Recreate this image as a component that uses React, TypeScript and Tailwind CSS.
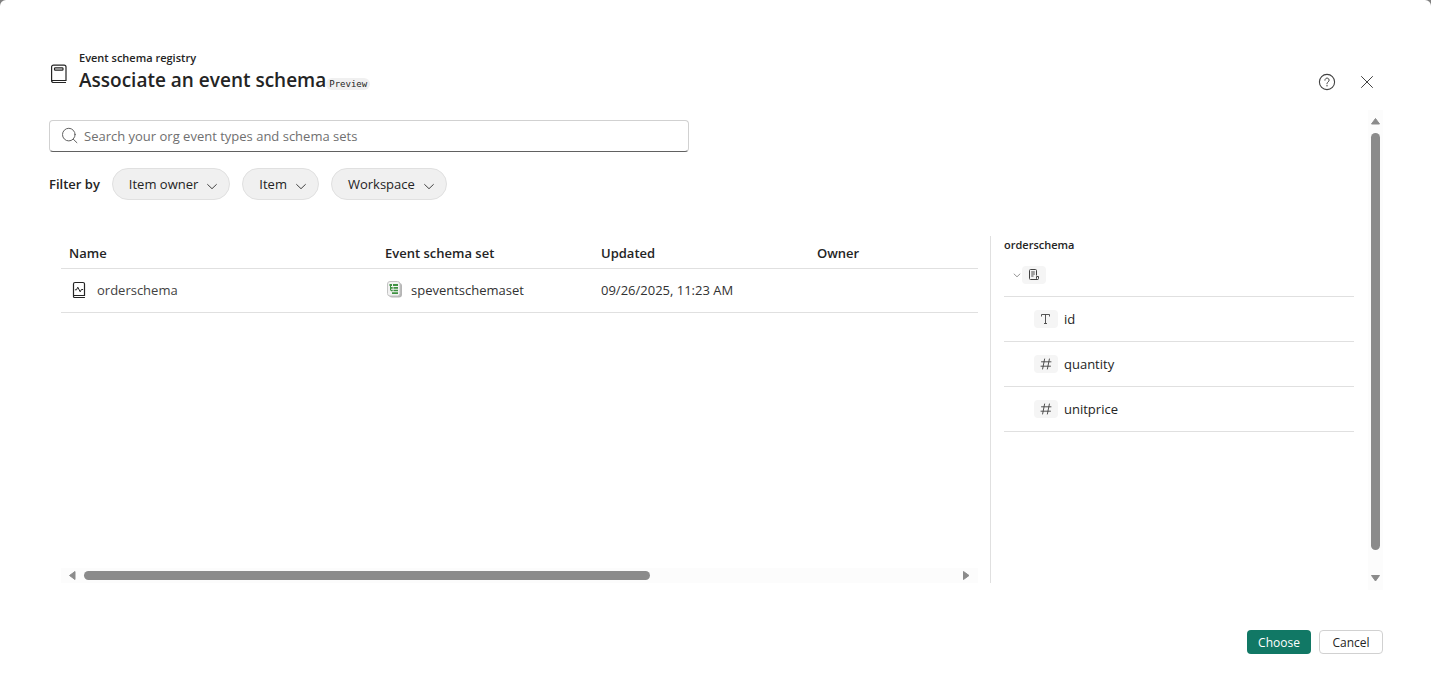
import { useState } from 'react';
import type { ReactNode } from 'react';

interface SchemaField {
  name: string;
  type: 'text' | 'number';
}

const filters = ['Item owner', 'Item', 'Workspace'];

const fields: SchemaField[] = [
  { name: 'id', type: 'text' },
  { name: 'quantity', type: 'number' },
  { name: 'unitprice', type: 'number' },
];

const BookIcon = () => (
  <svg width="20" height="20" viewBox="0 0 20 20" fill="none" stroke="#242424" strokeWidth="1.2">
    <path d="M17 18.5H4.5A1.8 1.8 0 0 1 2.6 16.7V3A1.9 1.9 0 0 1 4.5 1.1H15.100A1.900 1.900 0 0 1 17 3V16.5H2.8" />
    <rect x="5.500" y="3.800" width="8.500" height="2.400" rx="0.8" />
  </svg>
);

const HelpIcon = () => (
  <svg width="20" height="20" viewBox="0 0 20 20" fill="none" stroke="#424242">
    <circle cx="10" cy="10" r="7.6" strokeWidth="1.1" />
    <path d="M7.9 8.2a2.1 2.1 0 1 1 3.4 1.6c-.8.6-1.3 1-1.3 2" strokeLinecap="round" />
    <circle cx="10" cy="13.8" r="0.7" fill="#424242" stroke="none" />
  </svg>
);

const CloseIcon = () => (
  <svg width="20" height="20" viewBox="0 0 20 20" fill="none" stroke="#424242" strokeLinecap="round">
    <path d="M4.500 4.500l11 11M15.500 4.500l-11 11" />
  </svg>
);

const SearchIcon = () => (
  <svg width="20" height="20" viewBox="0 0 20 20" fill="none" stroke="#616161" strokeLinecap="round">
    <circle cx="8.8" cy="8.600" r="6.300" />
    <path d="M13.300 13.200l3.600 3.500" />
  </svg>
);

const ChevronIcon = ({ size, color }: { size: number; color: string }) => (
  <svg width={size} height={size} viewBox="0 0 12 12" fill="none" stroke={color} strokeLinecap="round">
    <path d="M1.600 4.500l4.400 4.200L10.400 4.500" />
  </svg>
);

const SchemaIcon = () => (
  <svg width="20" height="20" viewBox="0 0 20 20" fill="none" stroke="#242424" strokeLinecap="round">
    <path
      d="M15.500 17.500H5.500a1 1 0 0 1-1-1V4A1.500 1.500 0 0 1 6 2.500h8A1.500 1.500 0 0 1 15.500 4v11.500H4.500"
      strokeWidth="1.2"
    />
    <path d="M6.300 9.800h1.200l1.300-2.600 2.400 4.600 1.200-2.300h1.300" strokeLinejoin="round" />
  </svg>
);

const SchemaSetIcon = () => (
  <svg width="16" height="18" viewBox="0 0 16 18">
    <rect x="2" y="2" width="13" height="14.500" rx="3" fill="#b5b5b5" />
    <rect x="0.500" y="0.500" width="12.500" height="14.500" rx="2.500" fill="#f2f2f2" stroke="#c4c4c4" />
    <path
      d="M2.500 3h2.500v2H2.500zM6 3h5v2H6zM4 6h1.700v1.700H4zM6.500 6H11v1.800H6.500zM4 8.700h1.700v1.600H4zM6.500 8.700H11v1.600H6.500zM5 11.200h6V13H5z"
      fill="#3f9142"
    />
    <path d="M3.500 5v4.500" stroke="#3f9142" />
  </svg>
);

const RecordIcon = () => (
  <svg width="12" height="12" viewBox="0 0 12 12" fill="none" stroke="#424242">
    <path d="M8.500 6.500V1.500a1 1 0 0 0-1-1h-5a1 1 0 0 0-1 1v8a1 1 0 0 0 1 1h7a1 1 0 0 0 1-1V7.500h-2v2a1 1 0 0 0 1 1" />
    <path d="M3.200 3h3.600M3.200 5h3.600M3.200 7h2.300" />
  </svg>
);

const TextIcon = () => (
  <svg width="12" height="12" viewBox="0 0 12 12" fill="none" stroke="#424242" strokeWidth="0.900">
    <path d="M1.500 3.500v-2h8v2M5.500 1.500v9M4 10.500h3" />
  </svg>
);

const NumberIcon = () => (
  <svg width="12" height="12" viewBox="0 0 12 12" fill="none" stroke="#424242" strokeLinecap="round">
    <path d="M4.600 1L2.600 11M9.400 1l-2 10M1.500 3.800h9.500M1 8.200h9.500" strokeWidth="0.900" />
  </svg>
);

const TypeBadge = ({ children }: { children: ReactNode }) => (
  <span className="flex h-[18px] w-6 items-center justify-center rounded bg-[#f5f5f5]">{children}</span>
);

const Arrow = ({ d }: { d: string }) => (
  <svg width="11" height="11" viewBox="0 0 11 11" fill="#8b8b8b" stroke="#8b8b8b" strokeLinejoin="round">
    <path d={d} />
  </svg>
);

export default function App() {
  const [query, setQuery] = useState('');

  return (
    <div className="min-h-screen bg-[#808080] font-['Open_Sans','Noto_Sans',sans-serif] text-[#242424]">
      <main className="flex min-h-screen flex-col rounded-t-md bg-white pr-12 pb-[35px] pl-[49px]">
        <header className="flex h-[110px] items-end justify-between pb-3">
          <div className="flex items-center gap-[10px] pb-1">
            <span className="pt-1">
              <BookIcon />
            </span>
            <div>
              <p className="text-[11px] leading-4 font-semibold">Event schema registry</p>
              <div className="flex items-end">
                <h1 className="text-[19px] leading-7 font-semibold">Associate an event schema</h1>
                <span className="mb-1 rounded-full bg-[#f0f0f0] px-[3px] font-['DejaVu_Sans_Mono',monospace] text-[9px] leading-3">
                  Preview
                </span>
              </div>
            </div>
          </div>
          <div className="flex gap-2">
            <button type="button" aria-label="Help" className="flex h-8 w-8 items-center justify-center">
              <HelpIcon />
            </button>
            <button type="button" aria-label="Close" className="flex h-8 w-8 items-center justify-center">
              <CloseIcon />
            </button>
          </div>
        </header>

        <div className="flex flex-1">
          <div className="flex min-w-0 flex-1 flex-col pt-[10px] pr-[14px] pb-[7px]">
            <label className="flex h-8 w-full max-w-[640px] items-center gap-1 rounded border border-[#d1d1d1] border-b-[#616161] px-[10px]">
              <SearchIcon />
              <input
                type="text"
                aria-label="Search"
                value={query}
                onChange={e => setQuery(e.target.value)}
                placeholder="Search your org event types and schema sets"
                className="min-w-0 flex-1 text-[13px] leading-5 placeholder-[#707070] outline-none"
              />
            </label>

            <div className="mt-4 flex items-center gap-3">
              <span className="text-[13px] leading-5 font-semibold">Filter by</span>
              {filters.map(filter => (
                <button
                  key={filter}
                  type="button"
                  className="flex h-8 items-center gap-2 rounded-full border border-[#e0e0e0] bg-[#f0f0f0] pr-[11px] pl-4 text-[13px] leading-5"
                >
                  {filter}
                  <span className="pt-1">
                    <ChevronIcon size={12} color="#424242" />
                  </span>
                </button>
              ))}
            </div>

            <div className="mt-9 flex flex-1">
              <section className="mx-3 flex min-w-0 flex-1 flex-col">
                <table className="w-full table-fixed text-left text-[13px] leading-5">
                  <thead>
                    <tr className="h-8 border-b border-[#e0e0e0]">
                      <th className="w-[316px] px-2 pt-[2px] font-semibold">Name</th>
                      <th className="w-[216px] px-2 pt-[2px] font-semibold">Event schema set</th>
                      <th className="w-[216px] px-2 pt-[2px] font-semibold">Updated</th>
                      <th className="px-2 pt-[2px] font-semibold">Owner</th>
                    </tr>
                  </thead>
                  <tbody>
                    <tr className="h-11 border-b border-[#e0e0e0] text-[#424242]">
                      <td className="px-2">
                        <div className="flex items-center gap-2">
                          <SchemaIcon />
                          orderschema
                        </div>
                      </td>
                      <td className="px-2">
                        <div className="flex items-center gap-2 pl-[2px] text-[#323232]">
                          <SchemaSetIcon />
                          speventschemaset
                        </div>
                      </td>
                      <td className="px-2 text-[#323232]">09/26/2025, 11:23 AM</td>
                      <td className="px-2" />
                    </tr>
                  </tbody>
                </table>
                <div className="mt-auto flex h-[15px] items-center gap-[6px] bg-[#fcfcfc] px-[6px]">
                  <Arrow d="M8 1.500v8L2.500 5.500z" />
                  <div className="flex-1">
                    <div className="h-[9px] w-[65%] rounded-full bg-[#8b8b8b]" />
                  </div>
                  <Arrow d="M2.500 1.500v8L8 5.500z" />
                </div>
              </section>

              <aside className="w-[364px] border-l border-[#e0e0e0] pl-[13px]">
                <h2 className="pt-px text-[11px] leading-4 font-semibold">orderschema</h2>
                <div className="flex h-11 items-center border-b border-[#e0e0e0] pl-2">
                  <button type="button" aria-label="Collapse" className="flex w-[10px] justify-center">
                    <ChevronIcon size={8} color="#616161" />
                  </button>
                  <TypeBadge>
                    <RecordIcon />
                  </TypeBadge>
                </div>
                <ul>
                  {fields.map(field => (
                    <li
                      key={field.name}
                      className="flex h-[45px] items-center gap-[6px] border-b border-[#e0e0e0] pl-[30px] text-[13px] leading-5"
                    >
                      <TypeBadge>{field.type === 'text' ? <TextIcon /> : <NumberIcon />}</TypeBadge>
                      {field.name}
                    </li>
                  ))}
                </ul>
              </aside>
            </div>
          </div>

          <div className="flex w-[15px] flex-col items-center gap-[6px] bg-[#fcfcfc] py-[6px]">
            <Arrow d="M1.500 8h8L5.500 2.500z" />
            <div className="flex w-[9px] flex-1 flex-col">
              <div className="mb-[17px] flex-1 rounded-full bg-[#8b8b8b]" />
            </div>
            <Arrow d="M1.500 2.500h8L5.500 8z" />
          </div>
        </div>

        <footer className="mt-10 flex justify-end gap-2 text-xs leading-4">
          <button type="button" className="h-6 w-16 rounded bg-[#117865] pt-px text-white">
            Choose
          </button>
          <button type="button" className="h-6 w-16 rounded border border-[#d1d1d1] bg-white pt-px">
            Cancel
          </button>
        </footer>
      </main>
    </div>
  );
}
